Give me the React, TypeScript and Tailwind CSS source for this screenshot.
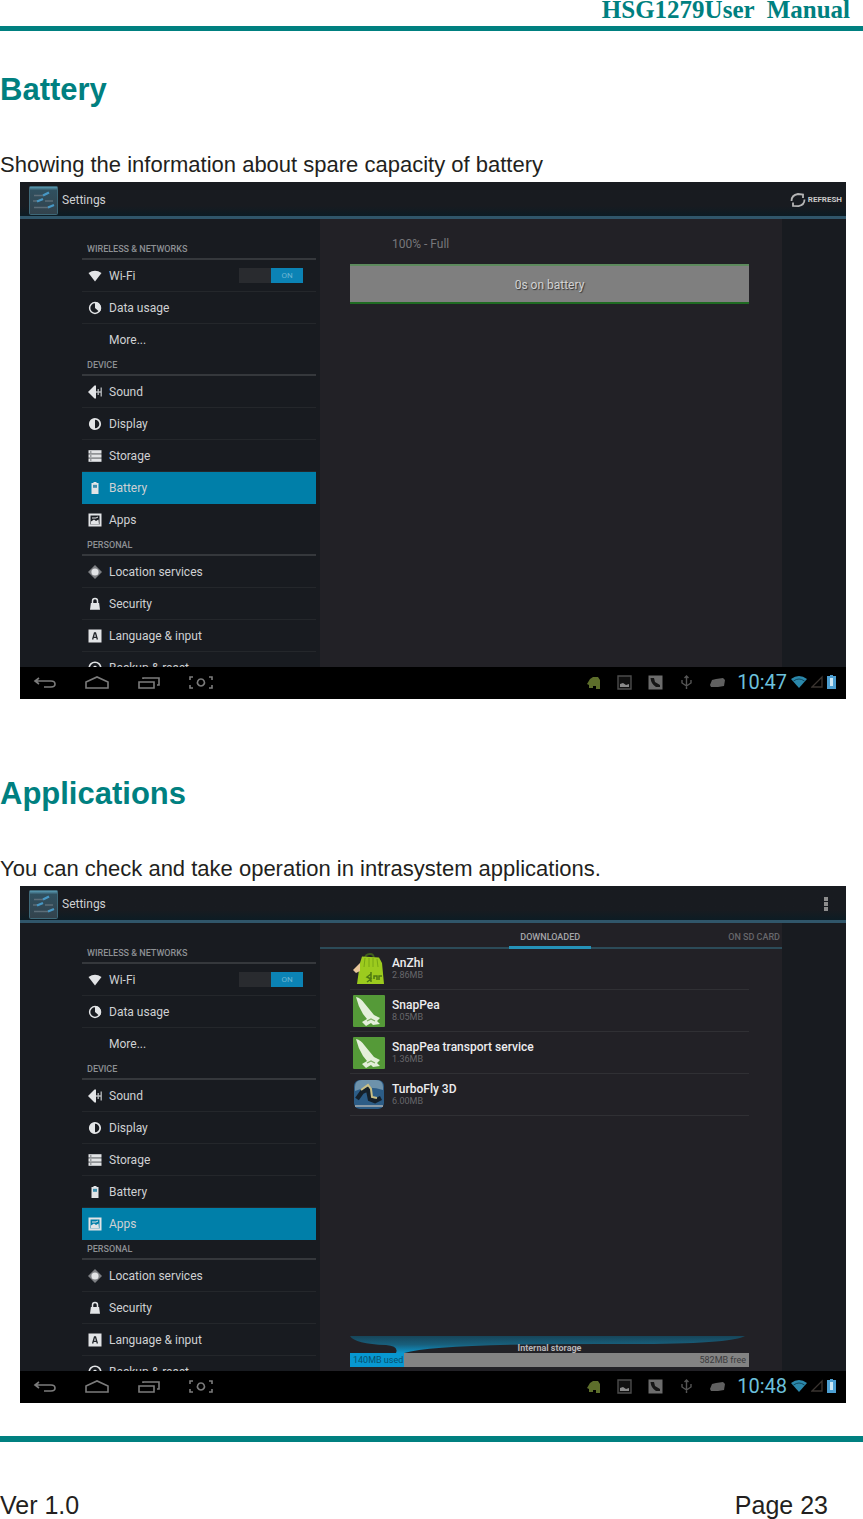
import React, { useState } from 'react';

type IconName =
  | 'wifi'
  | 'data'
  | 'sound'
  | 'display'
  | 'storage'
  | 'battery'
  | 'apps'
  | 'location'
  | 'security'
  | 'language'
  | 'backup';

interface MenuItem {
  label: string;
  icon?: IconName;
}

interface MenuGroup {
  title: string;
  items: MenuItem[];
}

const menu: MenuGroup[] = [
  {
    title: 'WIRELESS & NETWORKS',
    items: [{ label: 'Wi-Fi', icon: 'wifi' }, { label: 'Data usage', icon: 'data' }, { label: 'More...' }]
  },
  {
    title: 'DEVICE',
    items: [
      { label: 'Sound', icon: 'sound' },
      { label: 'Display', icon: 'display' },
      { label: 'Storage', icon: 'storage' },
      { label: 'Battery', icon: 'battery' },
      { label: 'Apps', icon: 'apps' }
    ]
  },
  {
    title: 'PERSONAL',
    items: [
      { label: 'Location services', icon: 'location' },
      { label: 'Security', icon: 'security' },
      { label: 'Language & input', icon: 'language' },
      { label: 'Backup & reset', icon: 'backup' }
    ]
  }
];

const apps = [
  { name: 'AnZhi', size: '2.86MB', icon: 'bag' },
  { name: 'SnapPea', size: '8.05MB', icon: 'pea' },
  { name: 'SnapPea transport service', size: '1.36MB', icon: 'pea' },
  { name: 'TurboFly 3D', size: '6.00MB', icon: 'turbo' }
];

const MenuIcon = ({ name }: { name: IconName }) => (
  <svg viewBox="0 0 14 14" className="w-[14px] h-[14px]" fill="#e2e4e6" aria-hidden="true">
    {name === 'wifi' && <path d="M0.5 4 Q7 -0.5 13.5 4 L7 12.5 Z" />}
    {name === 'data' && (
      <>
        <circle cx="7" cy="7" r="5.4" fill="none" stroke="#e2e4e6" strokeWidth="1.5" />
        <path d="M7 1 A6 6 0 0 1 11.6 11 L7 7 Z" />
      </>
    )}
    {name === 'sound' && (
      <>
        <path d="M0 7 L6.5 0.5 H8 V13.5 H6.5 Z" />
        <path d="M10.2 4 V10 M13.2 2.4 V11.6 M8 7 H13" stroke="#b9bcbf" strokeWidth="1.3" />
      </>
    )}
    {name === 'display' && (
      <>
        <circle cx="7" cy="7" r="5.2" fill="none" stroke="#e2e4e6" strokeWidth="1.8" />
        <path d="M7 1.5 A5.5 5.5 0 0 0 7 12.5 Z" />
      </>
    )}
    {name === 'storage' && (
      <>
        <rect x="0.5" y="1.2" width="13" height="3.4" />
        <rect x="0.5" y="5.3" width="13" height="3.4" />
        <rect x="0.5" y="9.4" width="13" height="3.4" />
        <path d="M2 3 H3.5 M2 7 H3.5 M2 11 H3.5" stroke="#50555a" />
      </>
    )}
    {name === 'battery' && (
      <>
        <path d="M5.5 1 H8.5 V2 H10.5 V13 H3.5 V2 H5.5 Z" />
        <rect x="5" y="3.8" width="4" height="3" fill="#3f8fae" />
      </>
    )}
    {name === 'apps' && (
      <>
        <path d="M0.5 0.5 H13.5 V13.5 H0.5 Z M2.5 2.5 V11.5 H11.5 V2.5 Z" fillRule="evenodd" />
        <path d="M3 11.5 V8.5 L6 6.5 L8 8 L10.5 6.5 L11 11.5 Z" />
        <path d="M4 5 H8 L10 4" fill="none" stroke="#e2e4e6" />
      </>
    )}
    {name === 'location' && (
      <>
        <path d="M7 0 L14 7 L7 14 L0 7 Z" opacity="0.5" />
        <circle cx="7" cy="7" r="3.6" />
      </>
    )}
    {name === 'security' && (
      <>
        <path d="M4.5 6.5 V4 A2.5 2.5 0 0 1 9.5 4 V6.5" fill="none" stroke="#e2e4e6" strokeWidth="1.5" />
        <path d="M2.9 6 H11.1 L12 12.8 H2 Z" />
      </>
    )}
    {name === 'language' && (
      <>
        <rect x="0.5" y="0.5" width="13" height="13" />
        <path d="M4.6 10.5 L6.5 4 H7.5 L9.4 10.5 M5.3 8.4 H8.7" fill="none" stroke="#22262b" strokeWidth="1.3" />
      </>
    )}
    {name === 'backup' && (
      <>
        <circle cx="7" cy="7" r="5.8" fill="none" stroke="#e2e4e6" strokeWidth="1.6" />
        <circle cx="7" cy="6.5" r="1.8" />
      </>
    )}
  </svg>
);

const SettingsLogo = () => (
  <svg viewBox="0 0 29 29" className="w-[29px] h-[29px]" aria-hidden="true">
    <defs>
      <linearGradient id="logo" x1="0" y1="0" x2="0" y2="1">
        <stop offset="0" stopColor="#5fa6c0" />
        <stop offset="0.14" stopColor="#30505f" />
        <stop offset="1" stopColor="#33424c" />
      </linearGradient>
    </defs>
    <rect x="0.5" y="0.5" width="28" height="28" rx="1" fill="url(#logo)" stroke="#3e6878" />
    <path d="M5 9.5 H14 M4 15 H9 M16 15 H24 M5 21.5 H20" stroke="#5c6d78" strokeWidth="1.4" />
    <path d="M14 9.5 L20 6.5 M8 15.5 L14 13 M19 21.5 L25 19" stroke="#4797c4" strokeWidth="2.4" />
  </svg>
);

const AppIcon = ({ name }: { name: string }) => (
  <svg viewBox="0 0 32 32" className="w-8 h-8" aria-hidden="true">
    {name === 'bag' && (
      <>
        <path d="M12 6 Q12 1 17 1 Q21 1 21 6" fill="none" stroke="#40601c" strokeWidth="1.8" />
        <path d="M9 3.5 L26 4.5 L29 10 L31 31 H4 L7 10 Z" fill="#9ccb1e" />
        <path d="M12 5 L11 14 M16 5 V14 M20 5 V14 M24 6 L25 14" stroke="#78a814" />
        <path d="M0 17 L7 10 L7 18 L3 20 Z" fill="#e9c79a" />
        <path d="M18 21 L14 24 L18 26 L14 29 M18 19 V29 M21 26 V23 H24 V27 M26 27 V23 H29" fill="none" stroke="#4d7a12" strokeWidth="1.5" />
      </>
    )}
    {name === 'pea' && (
      <>
        <rect width="32" height="32" rx="1" fill="#559a38" />
        <path d="M3 2 Q8 3 12 9 L21 20 L27 23 L24 26 L27 29 L20 30 L18 28 L13 31 L9 27 L14 24 L10 19 Q5 11 3 2 Z" fill="#e4efda" />
        <path d="M14 26 L18 24 L22 26" fill="none" stroke="#7fae63" strokeWidth="1.3" />
      </>
    )}
    {name === 'turbo' && (
      <>
        <rect x="1" y="1" width="30" height="29" rx="6" fill="#2c5c86" />
        <path d="M2 8 Q2 1 9 1 H23 Q30 1 30 8 V11 Q15 6 2 12 Z" fill="#6d92ab" />
        <path d="M4 20 L9 13 L15 10 L17 20 L22 22 L28 19" fill="none" stroke="#15202a" strokeWidth="4.5" />
        <path d="M8 11 L15 6 L18 10 L19 18 L24 19" fill="none" stroke="#c9bf85" strokeWidth="2" />
        <path d="M2 26 H30 V28 H2 Z" fill="#8a9aa6" />
      </>
    )}
  </svg>
);

const navButtons = [
  { label: 'Back', path: 'M7 2 L3 5 L7 8 M4 5 H19 Q23 5 23 8 Q23 11 19 11 H12' },
  { label: 'Home', path: 'M2 12 V6 L13 1 L24 6 V12 Z' },
  { label: 'Recent apps', path: 'M3 6 H18 V12 H3 Z M7 3 V2 H23 V9 H21' },
  { label: 'Screenshot', path: 'M5 1 H2 V4 M2 9 V12 H5 M21 1 H24 V4 M24 9 V12 H21 M13 3 A3.5 3.5 0 1 1 12.9 3 Z' }
];

const StatusBar = ({ time }: { time: string }) => (
  <div className="h-8 pb-[2px] bg-black flex items-center justify-between pl-3 pr-[10px]">
    <div className="flex gap-[26px]">
      {navButtons.map(b => (
        <button key={b.label} aria-label={b.label}>
          <svg viewBox="0 0 26 13" className="w-[26px] h-[13px]" fill="none" stroke="#7c7c7c" strokeWidth="1.6">
            <path d={b.path} />
          </svg>
        </button>
      ))}
    </div>
    <div className="flex items-center">
      <div className="flex gap-4 mr-3">
        <svg viewBox="0 0 15 15" className="w-[15px] h-[15px]" aria-hidden="true">
          <path d="M1 9 L4 4 L7 2 H12 L14 5 V14 H10 V11 H7 V13 H3 V10 Z" fill="#5d6e2b" />
        </svg>
        <svg viewBox="0 0 15 15" className="w-[15px] h-[15px]" aria-hidden="true">
          <path d="M1 1 H14 V14 H1 Z" fill="#101010" stroke="#4c4c4c" strokeWidth="1.4" />
          <path d="M3 12 V9 L6 8 L9 10 L12 9 V12 Z" fill="#8a8a8a" />
        </svg>
        <svg viewBox="0 0 15 15" className="w-[15px] h-[15px]" aria-hidden="true">
          <rect x="0.5" y="0.5" width="14" height="14" fill="#6c6c6c" />
          <path d="M2.5 3 L6 3 L7 7 L12 10 L12 12 H8 Q3 9 2.5 3 Z" fill="#151515" />
        </svg>
        <svg viewBox="0 0 15 15" className="w-[15px] h-[15px]" fill="none" stroke="#555" strokeWidth="1.4" aria-hidden="true">
          <path d="M7.5 14 V1 M5.5 3 L7.5 1 L9.5 3 M3 5 V8 L7.5 11 L12 8 V5" />
        </svg>
        <svg viewBox="0 0 15 15" className="w-[15px] h-[15px]" aria-hidden="true">
          <path d="M2 5 L6 4 L13 3 L15 5 L14 11 L8 12 L1 12 L0 10 Z" fill="#606060" />
        </svg>
      </div>
      <span className="text-[20px] leading-[30px] text-[#6cc0dc]">{time}</span>
      <svg viewBox="0 0 16 14" className="w-4 h-[14px] ml-1" aria-hidden="true">
        <path d="M0 4 Q8 -2 16 4 L8 13 Z" fill="#2b88ab" />
        <path d="M2.5 6 Q8 2 13.5 6" fill="none" stroke="#104a60" />
      </svg>
      <svg viewBox="0 0 12 14" className="w-3 h-[14px] ml-1" aria-hidden="true">
        <path d="M1 12 L11 2 V12 Z" fill="none" stroke="#3a3430" strokeWidth="1.3" />
      </svg>
      <svg viewBox="0 0 9 14" className="w-[9px] h-[14px] ml-1" aria-hidden="true">
        <path d="M3 0 H6 V1 H9 V14 H0 V1 H3 Z" fill="#4d9fd2" />
        <path d="M3 3 H6 V11 H3 Z" fill="#cfe8f5" />
      </svg>
    </div>
  </div>
);

const Sidebar = ({ active }: { active: string }) => {
  const [wifi, setWifi] = useState(true);

  return (
    <nav className="w-[234px] shrink-0 pt-[21px] mr-1">
      {menu.map(group => (
        <section key={group.title}>
          <h3 className="h-5 border-b-2 border-[#35383c] pl-[5px] text-[9px] leading-[18px] font-medium text-[#8d9094]">
            {group.title}
          </h3>
          <ul>
            {group.items.map((item, i) => (
              <li
                key={item.label}
                className={`h-8 flex items-center pr-[13px] ${
                  item.label === active
                    ? 'bg-[#007fa9]'
                    : i < group.items.length - 1
                      ? 'border-b border-[#24272b]'
                      : ''
                }`}
              >
                <button className="flex-1 flex items-center text-left pl-[6px] text-xs text-[#cfd1d3]">
                  <span className="w-[21px] shrink-0">{item.icon && <MenuIcon name={item.icon} />}</span>
                  {item.label}
                </button>
                {item.label === 'Wi-Fi' && (
                  <button
                    role="switch"
                    aria-checked={wifi}
                    aria-label="Wi-Fi"
                    onClick={() => setWifi(!wifi)}
                    className={`w-16 h-[15px] bg-[#292b2f] flex ${wifi ? 'justify-end' : 'justify-start'}`}
                  >
                    <span className="w-8 h-[15px] bg-[#0b83b5] text-[8px] leading-[15px] text-center text-[#6bb6d4]">
                      {wifi ? 'ON' : 'OFF'}
                    </span>
                  </button>
                )}
              </li>
            ))}
          </ul>
        </section>
      ))}
    </nav>
  );
};

interface TabletProps {
  active: string;
  time: string;
  action: React.ReactNode;
  children: React.ReactNode;
}

const Tablet = ({ active, time, action, children }: TabletProps) => (
  <div className="ml-5 mr-[17px] bg-[#181b20] font-[Roboto,sans-serif]">
    <header className="h-[37px] pt-[2px] border-b-[3px] border-[#30566a] bg-gradient-to-b from-[#181b20] from-70% to-[#0c1c24] flex items-center justify-between pl-[9px] pr-1">
      <div className="flex items-center gap-1">
        <SettingsLogo />
        <span className="text-xs text-[#cfd1d3]">Settings</span>
      </div>
      {action}
    </header>
    <div className="h-[448px] overflow-hidden flex pl-[62px] pr-16">
      <Sidebar active={active} />
      <main className="flex-1 min-w-0 bg-[#222126] flex flex-col">{children}</main>
    </div>
    <StatusBar time={time} />
  </div>
);

const BatteryPanel = () => (
  <div className="pl-[30px] pr-[33px] pt-4">
    <p className="pl-[42px] text-xs leading-[18px] text-[#77777b]">100% - Full</p>
    <button className="mt-[11px] w-full h-10 pt-[2px] bg-[#7f7f7f] border-y-2 border-t-[#5d8a5d] border-b-[#1f6b22] text-xs text-[#d2d2d2] [text-shadow:1px_1px_1px_#333]">
      0s on battery
    </button>
  </div>
);

const AppsPanel = () => (
  <>
    <div
      role="tablist"
      className="h-[26px] border-b-2 border-[#2c4b58] flex justify-end pr-[2px] text-[9px] leading-[14px] font-medium shrink-0"
    >
      <button role="tab" aria-selected="true" className="w-[82px] h-[26px] pt-1 border-b-[3px] border-[#2592b8] text-[#a5a5a9]">
        DOWNLOADED
      </button>
      <button role="tab" aria-selected="false" className="h-[26px] pt-1 pb-[3px] ml-[137px] text-[#67676b]">
        ON SD CARD
      </button>
    </div>
    <ul className="pl-[30px] pr-[33px] -mt-px">
      {apps.map(app => (
        <li key={app.name} className="h-[42px] border-b border-[#303034] flex items-center pl-[3px] gap-[7px]">
          <AppIcon name={app.icon} />
          <div>
            <p className="text-xs leading-[14px] font-medium text-[#ededef]">{app.name}</p>
            <p className="text-[9px] leading-[11px] text-[#67676b]">{app.size}</p>
          </div>
        </li>
      ))}
    </ul>
    <div className="mt-auto pl-[30px] pr-[33px] pb-1 relative">
      <svg viewBox="0 0 399 17" preserveAspectRatio="none" className="w-full h-[17px]" aria-hidden="true">
        <defs>
          <linearGradient id="funnel" x1="0" y1="0" x2="0" y2="1">
            <stop offset="0" stopColor="#174559" />
            <stop offset="0.5" stopColor="#185f7c" />
            <stop offset="1" stopColor="#0d95cb" />
          </linearGradient>
        </defs>
        <path d="M0 0 H395 Q380 8 280 8 Q90 7 54 17 H46 Q49 10 36 9 Q5 8 0 0 Z" fill="url(#funnel)" />
      </svg>
      <span className="absolute inset-x-0 top-[6px] pr-[3px] text-center text-[9px] leading-3 font-bold text-[#b5b5b8]">
        Internal storage
      </span>
      <div className="h-[14px] flex bg-[#838383] text-[9px] leading-[14px] text-[#3a3a3c]">
        <span className="w-[54px] bg-[#0797d0] pl-[3px] text-[#06516f] whitespace-nowrap">140MB used</span>
        <span className="ml-auto pr-[3px]">582MB free</span>
      </div>
    </div>
  </>
);

const SectionHead = ({ title, text }: { title: string; text: string }) => (
  <>
    <h2 className="text-[31px] leading-[38px] font-bold text-[#008080] mb-[38px]">{title}</h2>
    <p className="text-[22px] leading-[35px] text-[#231f20]">{text}</p>
  </>
);

export default function App() {
  return (
    <div className="bg-white font-['Liberation_Sans',sans-serif]">
      <header className="border-b-[5px] border-[#008080] pb-[6px] pr-[13px] text-right whitespace-pre font-['Liberation_Serif',serif] font-bold text-[25px] leading-5 text-[#008080]">
        {'HSG1279User  Manual'}
      </header>

      <section className="pt-10">
        <SectionHead title="Battery" text="Showing the information about spare capacity of battery" />
        <Tablet
          active="Battery"
          time="10:47"
          action={
            <button className="flex items-center gap-[2px] text-[8px] font-bold text-[#c8c8c8]">
              <svg viewBox="0 0 16 16" className="w-4 h-4" fill="none" stroke="#b5b5b5" strokeWidth="1.8" aria-hidden="true">
                <path d="M1.5 9 Q1.5 3 8 2 L13 2.5 V6 M14.5 7.5 Q14.5 13 8.5 14.2 L3 13.8 V10.5" />
              </svg>
              REFRESH
            </button>
          }
        >
          <BatteryPanel />
        </Tablet>
      </section>

      <section className="pt-[76px]">
        <SectionHead title="Applications" text="You can check and take operation in intrasystem applications." />
        <Tablet
          active="Apps"
          time="10:48"
          action={
            <button aria-label="More options" className="px-[14px]">
              <svg viewBox="0 0 4 16" className="w-1 h-4" fill="#8d8d8d">
                <rect y="1" width="4" height="4" />
                <rect y="6" width="4" height="4" />
                <rect y="11" width="4" height="4" />
              </svg>
            </button>
          }
        >
          <AppsPanel />
        </Tablet>
      </section>

      <footer className="mt-[33px] border-t-[6px] border-[#008080] pt-[49px] pr-[35px] flex justify-between text-[25px] leading-7 text-[#231f20]">
        <span>Ver 1.0</span>
        <span>Page 23</span>
      </footer>
    </div>
  );
}
